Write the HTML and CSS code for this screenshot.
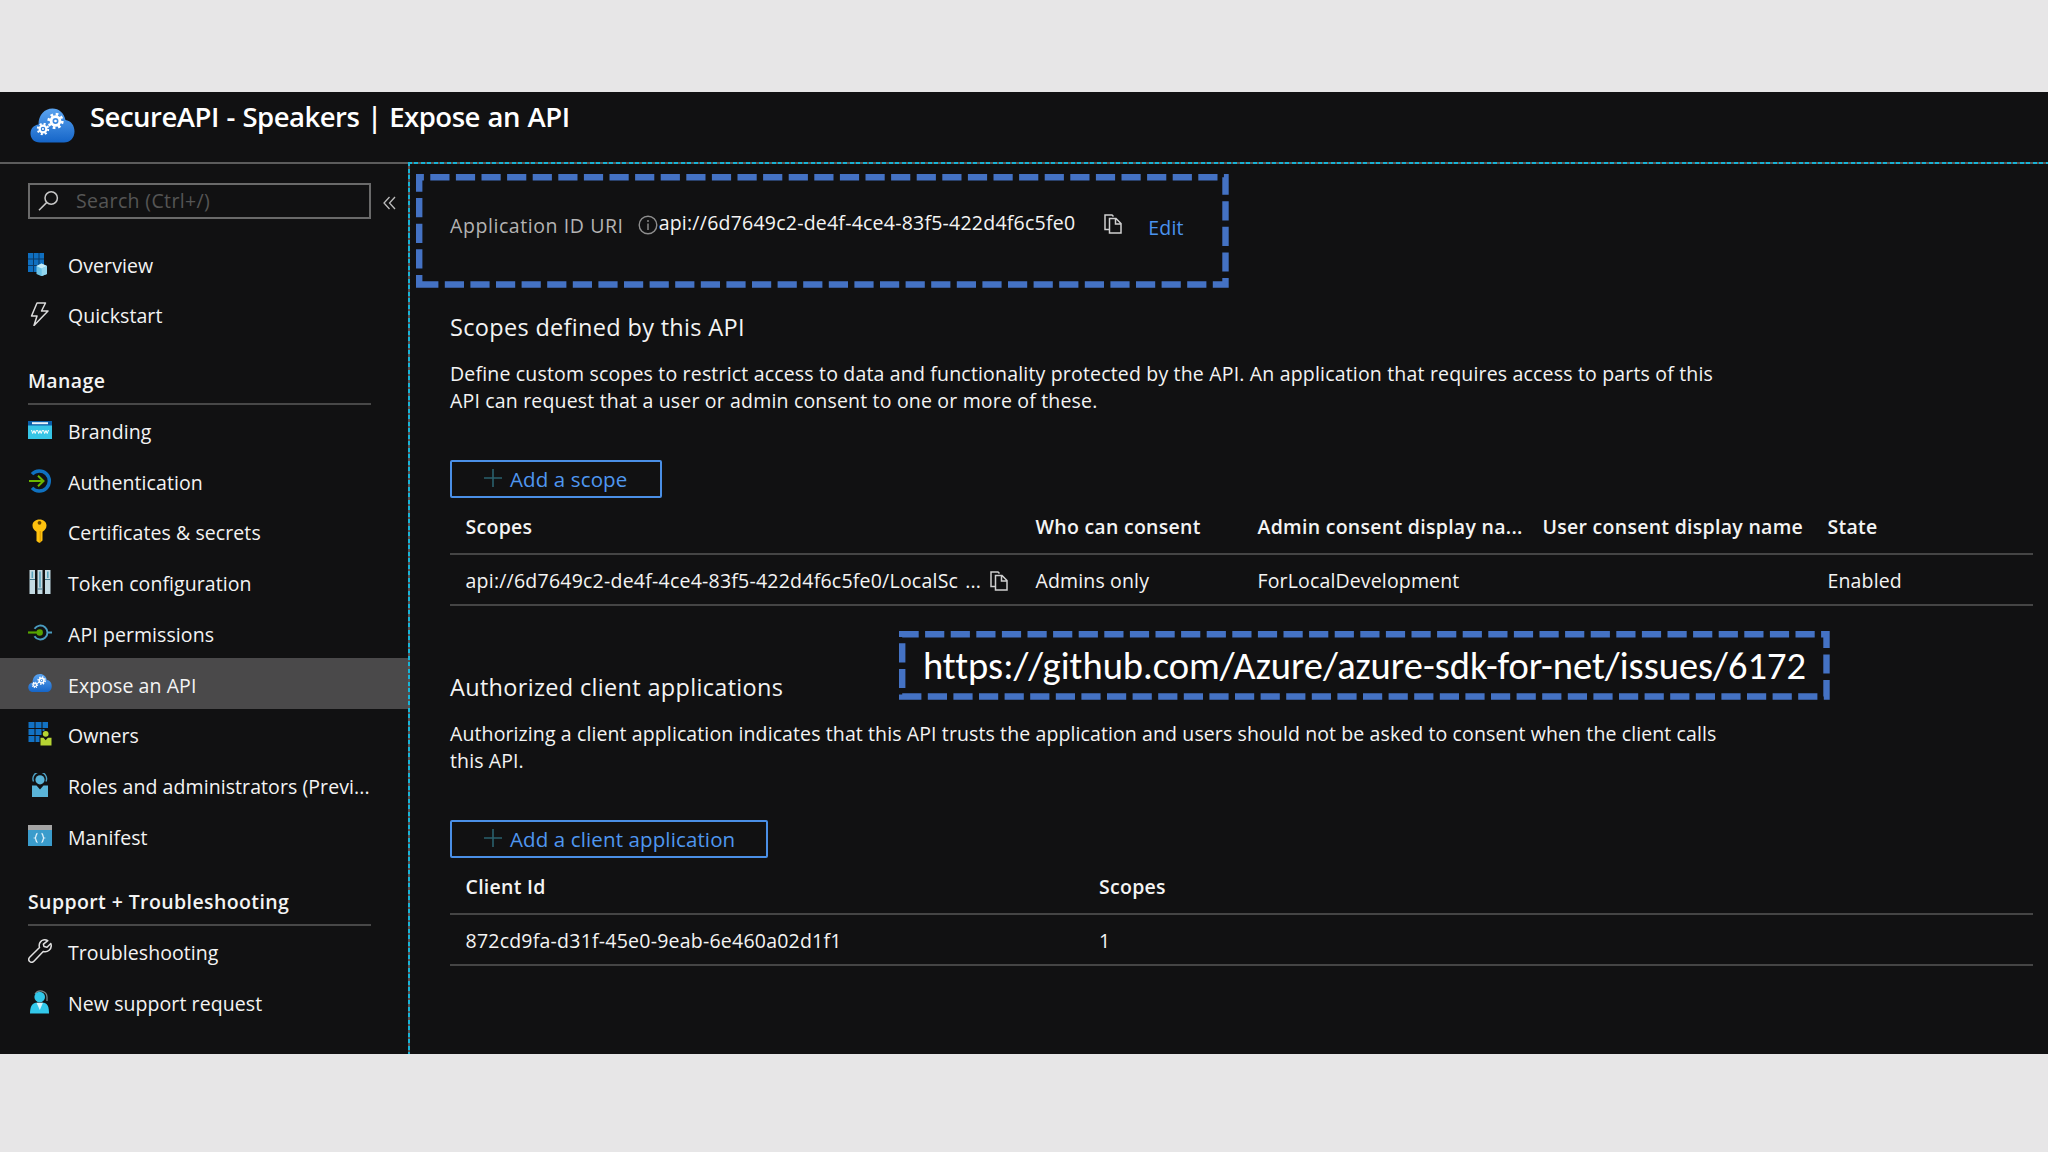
FILE: index.html
```
<!DOCTYPE html>
<html lang="en">

<head>
  <meta charset="UTF-8" />
  <meta name="viewport" content="width=device-width, initial-scale=1.0">
  <title>SecureAPI - Speakers | Expose an API</title>
  <link rel="stylesheet" href="styles.css">
</head>

<body>
  <!-- shared shapes -->
  <svg class="defs" aria-hidden="true">
    <defs>
      <linearGradient id="cloudFill" x1="0" y1="0" x2="0" y2="1">
        <stop offset="0" stop-color="#5ba4f0" />
        <stop offset="1" stop-color="#1565c8" />
      </linearGradient>
      <symbol id="gear" viewBox="-10 -10 20 20">
        <circle r="5.2" fill="none" stroke="#fff" stroke-width="3.4" />
        <circle r="8" fill="none" stroke="#fff" stroke-width="3.2" stroke-dasharray="3.14 3.14" />
        <circle r="1.6" fill="#fff" />
      </symbol>
      <symbol id="cloud" viewBox="0 0 45 35">
        <path d="M10 34.5C4 34.5 .5 30.500 .5 25.500c0-5 3.500-8.500 8-9C8.500 7 14.500 .5 22.500 .5c6.500 0 11.500 4.500 13 11.500 5.500 .5 9 5.500 9 11.500 0 6.500-4.500 11-10.500 11z" fill="url(#cloudFill)" />
        <use href="#gear" x="17" y="4.500" width="17" height="17" />
        <use href="#gear" x="6.500" y="14.500" width="13" height="13" />
      </symbol>
      <symbol id="copy" viewBox="0 0 18 20">
        <path d="M5.500 15.500H1V1h7l1.500 1.500M5.500 4.500h6.500l5 5V19H5.500zM11.500 4.500V10H17" fill="none" stroke="currentColor" stroke-width="1.5" />
      </symbol>
    </defs>
  </svg>

  <div class="portal">
    <header class="title-bar">
      <svg class="title-icon"><use href="#cloud" /></svg>
      <h1>SecureAPI - Speakers | Expose an API</h1>
    </header>

    <div class="layout">
      <aside class="sidebar">
        <div class="search-row">
          <div class="search">
            <svg width="21" height="20" viewBox="0 0 21 20" fill="none" stroke="#c8c8c8" stroke-width="1.5">
              <circle cx="13.200" cy="7" r="6.200" />
              <path d="M8.800 11.400L1 19.200" />
            </svg>
            <span>Search (Ctrl+/)</span>
          </div>
          <svg class="collapse" width="13" height="14" viewBox="0 0 13 14" fill="none" stroke="#bdbdbd" stroke-width="1.3">
            <path d="M6.500 1L1 7l5.500 6M12 1L6.500 7l5.500 6" />
          </svg>
        </div>

        <nav>
          <a class="item">
            <svg viewBox="0 0 24 24">
              <path d="M0 1h16v19H0z" fill="#0f6fc0" />
              <path d="M5.500 1v19M11 1v19M0 7h16M0 13.500h16" stroke="#0b3a66" stroke-width="1" />
              <path d="M13.500 11.500l5.500 2.500v8l-5.500 2.200L8.500 22v-8z" fill="#6cc3e8" />
              <path d="M8.500 14l5-2.500 5.500 2.500-5.500 2.500z" fill="#c5ecf9" />
              <path d="M13.700 16.500V24l5.300-2v-8z" fill="#93d6ef" />
            </svg>
            <span>Overview</span>
          </a>
          <a class="item">
            <svg viewBox="0 0 24 24" fill="none" stroke="#dcdcdc" stroke-width="1.500" stroke-linejoin="round">
              <path d="M9 1h8.500l-4 8H20L6 23.500l3-9.500H3.500z" />
            </svg>
            <span>Quickstart</span>
          </a>

          <h3>Manage</h3>
          <a class="item">
            <svg viewBox="0 0 24 24">
              <path d="M0 3h24v18H0z" fill="#36c5e6" />
              <path d="M0 3h24v4.500H0z" fill="#0a5ea8" />
              <path d="M4 4.200h16v2H4z" fill="#e8f3fb" />
              <path d="M3.500 12l1.200 3.500L6 12.500l1.200 3L8.500 12M9.500 12l1.200 3.500 1.300-3 1.200 3 1.300-3.500M15.500 12l1.200 3.500 1.300-3 1.200 3 1.300-3.500" fill="none" stroke="#fff" stroke-width="1" />
            </svg>
            <span>Branding</span>
          </a>
          <a class="item">
            <svg viewBox="0 0 24 24" fill="none">
              <path d="M4 5.200A10 10 0 1 1 4 18.800" stroke="#0f71c0" stroke-width="3.400" />
              <path d="M1 12h14M10 6.800l5.500 5.200-5.500 5.200" stroke="#6bb700" stroke-width="2" />
            </svg>
            <span>Authentication</span>
          </a>
          <a class="item">
            <svg viewBox="0 0 24 24">
              <path d="M11.500 .5c4 0 7 2.500 7 6 0 3-1.500 4.500-4 6.200V21.500l-2.500 2.300h-1L8.500 22V12.700c-2.500-1.700-4-3.200-4-6.200 0-3.500 3-6 7-6z" fill="#ffc20e" />
              <circle cx="11.500" cy="3.800" r="1.900" fill="#6b4700" />
              <path d="M12.200 12v11" stroke="#d99600" stroke-width="1" />
            </svg>
            <span>Certificates &amp; secrets</span>
          </a>
          <a class="item">
            <svg viewBox="0 0 24 24">
              <path d="M1.500 0H7v24H1.500zM9.500 0h5v24h-5zM17 0h5.500v24H17z" fill="#c4dbe3" />
              <path d="M1.500 9.500H7M9.500 19h5M17 9.500h5.500" stroke="#41778a" stroke-width="1.200" />
              <path d="M4.300 1.500v6.500M12 1.500v16M19.800 1.500v6.500" stroke="#5ba5bd" stroke-width="1.600" />
            </svg>
            <span>Token configuration</span>
          </a>
          <a class="item">
            <svg viewBox="0 0 24 24" fill="none">
              <path d="M6.500 7.800a7 7 0 1 1 0 7.400M18.500 11.500H24" stroke="#4a9cc0" stroke-width="1.900" />
              <path d="M0 11.500h11" stroke="#57a300" stroke-width="2.200" />
              <circle cx="11.700" cy="11.500" r="3.200" fill="#57a300" />
            </svg>
            <span>API permissions</span>
          </a>
          <a class="item active">
            <svg viewBox="0 0 24 24"><use href="#cloud" y="-1" width="24" height="24" /></svg>
            <span>Expose an API</span>
          </a>
          <a class="item">
            <svg viewBox="0 0 24 24">
              <path d="M.5 0h6v6h-6zM7.500 0h6v6h-6zM14.500 0h5.500v6h-5.500zM.5 7h6v6h-6zM7.500 7h6v6h-6zM.5 14h6v6h-6zM7.500 14h4v6h-4zM14.500 7h2v2h-2z" fill="#1272c4" />
              <circle cx="17.700" cy="11.800" r="2.900" fill="#b6d433" />
              <path d="M12.500 15.800h3l2.200 2.500 2.200-2.500h3.600V23.500h-11z" fill="#b6d433" />
            </svg>
            <span>Owners</span>
          </a>
          <a class="item">
            <svg viewBox="0 0 24 24">
              <path d="M5.500 8.500a6.800 6.800 0 1 1 12.500 0" fill="none" stroke="#4da0c4" stroke-width="1.400" />
              <circle cx="12" cy="6.800" r="4.600" fill="#5ab4d8" />
              <path d="M4 12.500h4.500l3.500 4 3.500-4H20V24H4z" fill="#5ab4d8" />
            </svg>
            <span>Roles and administrators (Previ...</span>
          </a>
          <a class="item">
            <svg viewBox="0 0 24 24">
              <path d="M0 1h24v21H0z" fill="#3a9ccc" />
              <path d="M0 1h24v5H0z" fill="#a5a5a5" />
              <path d="M9.500 9.500c-2 0-1 4-2.500 4.500 1.500 .5 .5 4.500 2.500 4.500M13.500 9.500c2 0 1 4 2.500 4.500-1.500 .5-.5 4.500-2.500 4.500" fill="none" stroke="#e4f3fb" stroke-width="1.300" />
            </svg>
            <span>Manifest</span>
          </a>

          <h3>Support + Troubleshooting</h3>
          <a class="item">
            <svg viewBox="0 0 24 24" fill="none" stroke="#e0e0e0" stroke-width="1.500" stroke-linejoin="round">
              <path d="M19.800 1.600c-3-1.500-6.300-.6-7.800 1.900-1 1.700-1 3.400-.5 5L1.700 18.300c-1.200 1.300-1.200 3 0 4.200s3 1.100 4.200-.2l9.300-9.800c2 .6 4.200 .3 5.900-1.200 2-1.800 2.600-4.300 1.700-6.800L19 8.200l-3-.6-.6-2.400z" />
            </svg>
            <span>Troubleshooting</span>
          </a>
          <a class="item">
            <svg viewBox="0 0 24 24">
              <path d="M7 4a6.500 6.500 0 0 1 12 3v4" fill="none" stroke="#77888c" stroke-width="1.300" />
              <circle cx="11.700" cy="7" r="5.300" fill="#32c8ea" />
              <path d="M2 23.500c0-6 1.500-10 5.500-10.800h8.500c4 .8 5 4.800 5 10.800z" fill="#32c8ea" />
              <path d="M8.500 12.700l3.300 7.300 3.200-7.300z" fill="#d5f4fb" />
            </svg>
            <span>New support request</span>
          </a>
        </nav>
      </aside>

      <main class="content">
        <div class="uri-row">
          <span class="uri-label">Application ID URI</span>
          <svg class="info" width="20" height="20" viewBox="0 0 20 20" fill="none" stroke="#8f8f8f" stroke-width="1.400">
            <circle cx="10" cy="10" r="8.800" />
            <path d="M10 5v2M10 8.500V15" />
          </svg>
          <span class="uri-value">api://6d7649c2-de4f-4ce4-83f5-422d4f6c5fe0</span>
          <svg class="copy"><use href="#copy" /></svg>
          <a class="edit">Edit</a>
          <svg class="callout-frame" width="813" height="114" viewBox="0 0 813 114">
            <path d="M3.200 110.500H809.500V3.200H3.200Z" />
          </svg>
        </div>

        <section>
          <h2>Scopes defined by this API</h2>
          <p>Define custom scopes to restrict access to data and functionality protected by the API. An application that requires access to parts of this<br>API can request that a user or admin consent to one or more of these.</p>
          <button class="add-scope">
            <svg width="18" height="18" viewBox="0 0 18 18"><path d="M9 0v18M0 9h18" /></svg>
            <span>Add a scope</span>
          </button>
          <table class="scopes">
            <colgroup>
              <col class="c-scope"><col class="c-who"><col class="c-admin"><col class="c-user"><col>
            </colgroup>
            <thead>
              <tr>
                <th>Scopes</th>
                <th>Who can consent</th>
                <th>Admin consent display na...</th>
                <th>User consent display name</th>
                <th>State</th>
              </tr>
            </thead>
            <tbody>
              <tr>
                <td>
                  <div class="scope-cell">
                    <span>api://6d7649c2-de4f-4ce4-83f5-422d4f6c5fe0/LocalSc</span>
                    <span class="dots">...</span>
                    <svg class="copy"><use href="#copy" /></svg>
                  </div>
                </td>
                <td>Admins only</td>
                <td>ForLocalDevelopment</td>
                <td></td>
                <td>Enabled</td>
              </tr>
            </tbody>
          </table>
        </section>

        <section>
          <h2>Authorized client applications</h2>
          <p class="tight">Authorizing a client application indicates that this API trusts the application and users should not be asked to consent when the client calls<br>this API.</p>
          <button class="add-client">
            <svg width="18" height="18" viewBox="0 0 18 18"><path d="M9 0v18M0 9h18" /></svg>
            <span>Add a client application</span>
          </button>
          <table class="clients">
            <colgroup>
              <col class="c-client"><col>
            </colgroup>
            <thead>
              <tr>
                <th>Client Id</th>
                <th>Scopes</th>
              </tr>
            </thead>
            <tbody>
              <tr>
                <td>872cd9fa-d31f-45e0-9eab-6e460a02d1f1</td>
                <td>1</td>
              </tr>
            </tbody>
          </table>
        </section>

        <!-- note laid over the page -->
        <div class="note">
          <svg class="callout-frame" width="931" height="69" viewBox="0 0 931 69">
            <path d="M3.200 65.500H927.500V3.200H3.200Z" />
          </svg>
          <span>https://github.com/Azure/azure-sdk-for-net/issues/6172</span>
        </div>
      </main>
    </div>
  </div>
</body>

</html>
```
FILE: styles.css
```
* {
  box-sizing: border-box;
}

body {
  margin: 0;
  height: 1152px;
  padding-top: 92px;
  background: #e7e6e7;
  color: #f4f4f4;
  font-family: "Segoe UI", "Open Sans", "Noto Sans", sans-serif;
  font-size: 19.5px;
  letter-spacing: 0.18px;
  overflow: hidden;
}

h1,
h2,
h3,
p {
  margin: 0;
}

.defs {
  position: absolute;
  width: 0;
  height: 0;
}

.portal {
  height: 962px;
  background: #111112;
  display: flex;
  flex-direction: column;
}

/* Title */
.title-bar {
  height: 70px;
  padding-left: 30px;
  display: flex;
  align-items: flex-start;
  gap: 15px;
}

.title-icon {
  width: 45px;
  height: 35px;
  margin-top: 16px;
}

h1 {
  font-size: 27.5px;
  font-weight: 600;
  line-height: 36px;
  margin-top: 7px;
  letter-spacing: -0.5px;
  word-spacing: 1px;
  color: #fff;
}

.layout {
  flex: 1;
  display: flex;
}

/* Sidebar */
.sidebar {
  width: 408px;
  border-top: 2px solid #5c5c5c;
}

.search-row {
  display: flex;
  align-items: center;
  padding: 19px 0 19.4px 28px;
}

.search {
  width: 343px;
  height: 36px;
  border: 2px solid #6a6a6a;
  padding-left: 8px;
  display: flex;
  align-items: center;
  gap: 17px;
  color: #555;
  letter-spacing: 0.36px;
}

.search span {
  padding-bottom: 2px;
}

.collapse {
  margin: 4px 0 0 12px;
}

.item {
  height: 50.7px;
  padding-left: 28px;
  display: flex;
  align-items: center;
  gap: 16px;
  letter-spacing: 0.08px;
}

.item svg {
  width: 24px;
  height: 24px;
  flex: none;
}

.item span {
  padding-top: 3px;
  white-space: nowrap;
}

.item.active {
  background: #4a494a;
}

h3 {
  height: 65px;
  margin: 0 37px 0 28px;
  padding-top: 27px;
  border-bottom: 2px solid #484848;
  font-size: 19.5px;
  font-weight: 600;
  line-height: 27px;
  letter-spacing: 0.4px;
}

/* Content pane with its focus outline */
.content {
  flex: 1;
  position: relative;
  padding: 2px 15px 0 42px;
  background:
    repeating-linear-gradient(90deg, #17b3d6 0 4px, #5c5350 4px 6.5px) 0 0 / 100% 2px no-repeat,
    repeating-linear-gradient(180deg, #17b3d6 0 4px, #5c5350 4px 6.5px) 0 0 / 2px 100% no-repeat;
}

.uri-row {
  height: 148px;
  padding-top: 48px;
  display: flex;
  align-items: flex-start;
  line-height: 27px;
}

.uri-label {
  color: #b4b4b4;
  letter-spacing: 0.58px;
}

.info {
  margin: 3px 1px 0 14px;
}

.uri-value {
  margin-top: -3px;
  letter-spacing: 0.23px;
}

.copy {
  width: 18px;
  height: 20px;
  color: #d0d0d0;
}

.uri-row .copy {
  margin: 2px 26px 0 29px;
}

.edit {
  margin-top: 2px;
  color: #4a93ee;
}

.callout-frame {
  fill: none;
  stroke: #4472c4;
  stroke-width: 6.4;
  stroke-dasharray: 19.2 6.4;
}

.uri-row .callout-frame {
  position: absolute;
  left: 8px;
  top: 12px;
}

section {
  height: 360px;
}

h2 {
  font-size: 23.5px;
  font-weight: 400;
  line-height: 30px;
  letter-spacing: 0.32px;
  margin-bottom: 18px;
}

p {
  line-height: 27px;
  margin-bottom: 46px;
  white-space: nowrap;
}

p.tight {
  letter-spacing: 0.11px;
}

button {
  height: 38px;
  padding: 0 0 0 32px;
  display: flex;
  align-items: center;
  gap: 8px;
  background: none;
  border: 2px solid #4a8fe6;
  border-radius: 2px;
  color: #4f97f0;
  font: inherit;
  font-size: 20.5px;
  letter-spacing: 0.12px;
}

button svg {
  margin-top: -3px;
  stroke: #2a606d;
  stroke-width: 1.6;
}

.add-scope {
  width: 212px;
}

.add-client {
  width: 318px;
}

table {
  width: 100%;
  table-layout: fixed;
  border-collapse: separate;
  border-spacing: 0;
}

th,
td {
  padding: 2px 0 0;
  text-align: left;
  white-space: nowrap;
  border-bottom: 2px solid #454545;
}

th {
  height: 57px;
  font-weight: 600;
  letter-spacing: 0.28px;
}

td {
  height: 51px;
  letter-spacing: 0.15px;
}

th:first-child,
td:first-child {
  padding-left: 15.5px;
}

.clients td {
  letter-spacing: 0.23px;
}

.c-scope {
  width: 585.5px;
}

.c-who {
  width: 222px;
}

.c-admin {
  width: 285px;
}

.c-user {
  width: 285px;
}

.c-client {
  width: 649px;
}

.scope-cell {
  display: flex;
  align-items: center;
  letter-spacing: 0.23px;
}

.dots {
  margin: 0 9px 0 7px;
}

.note {
  position: absolute;
  left: 491px;
  top: 469px;
  width: 931px;
  height: 69px;
  display: flex;
  justify-content: center;
  align-items: center;
  font-family: Calibri, Carlito, Lato, sans-serif;
  font-size: 38.5px;
  font-variant-ligatures: none;
  letter-spacing: 0;
  color: #fff;
}

.note .callout-frame {
  position: absolute;
  left: 0;
  top: 0;
}
```
